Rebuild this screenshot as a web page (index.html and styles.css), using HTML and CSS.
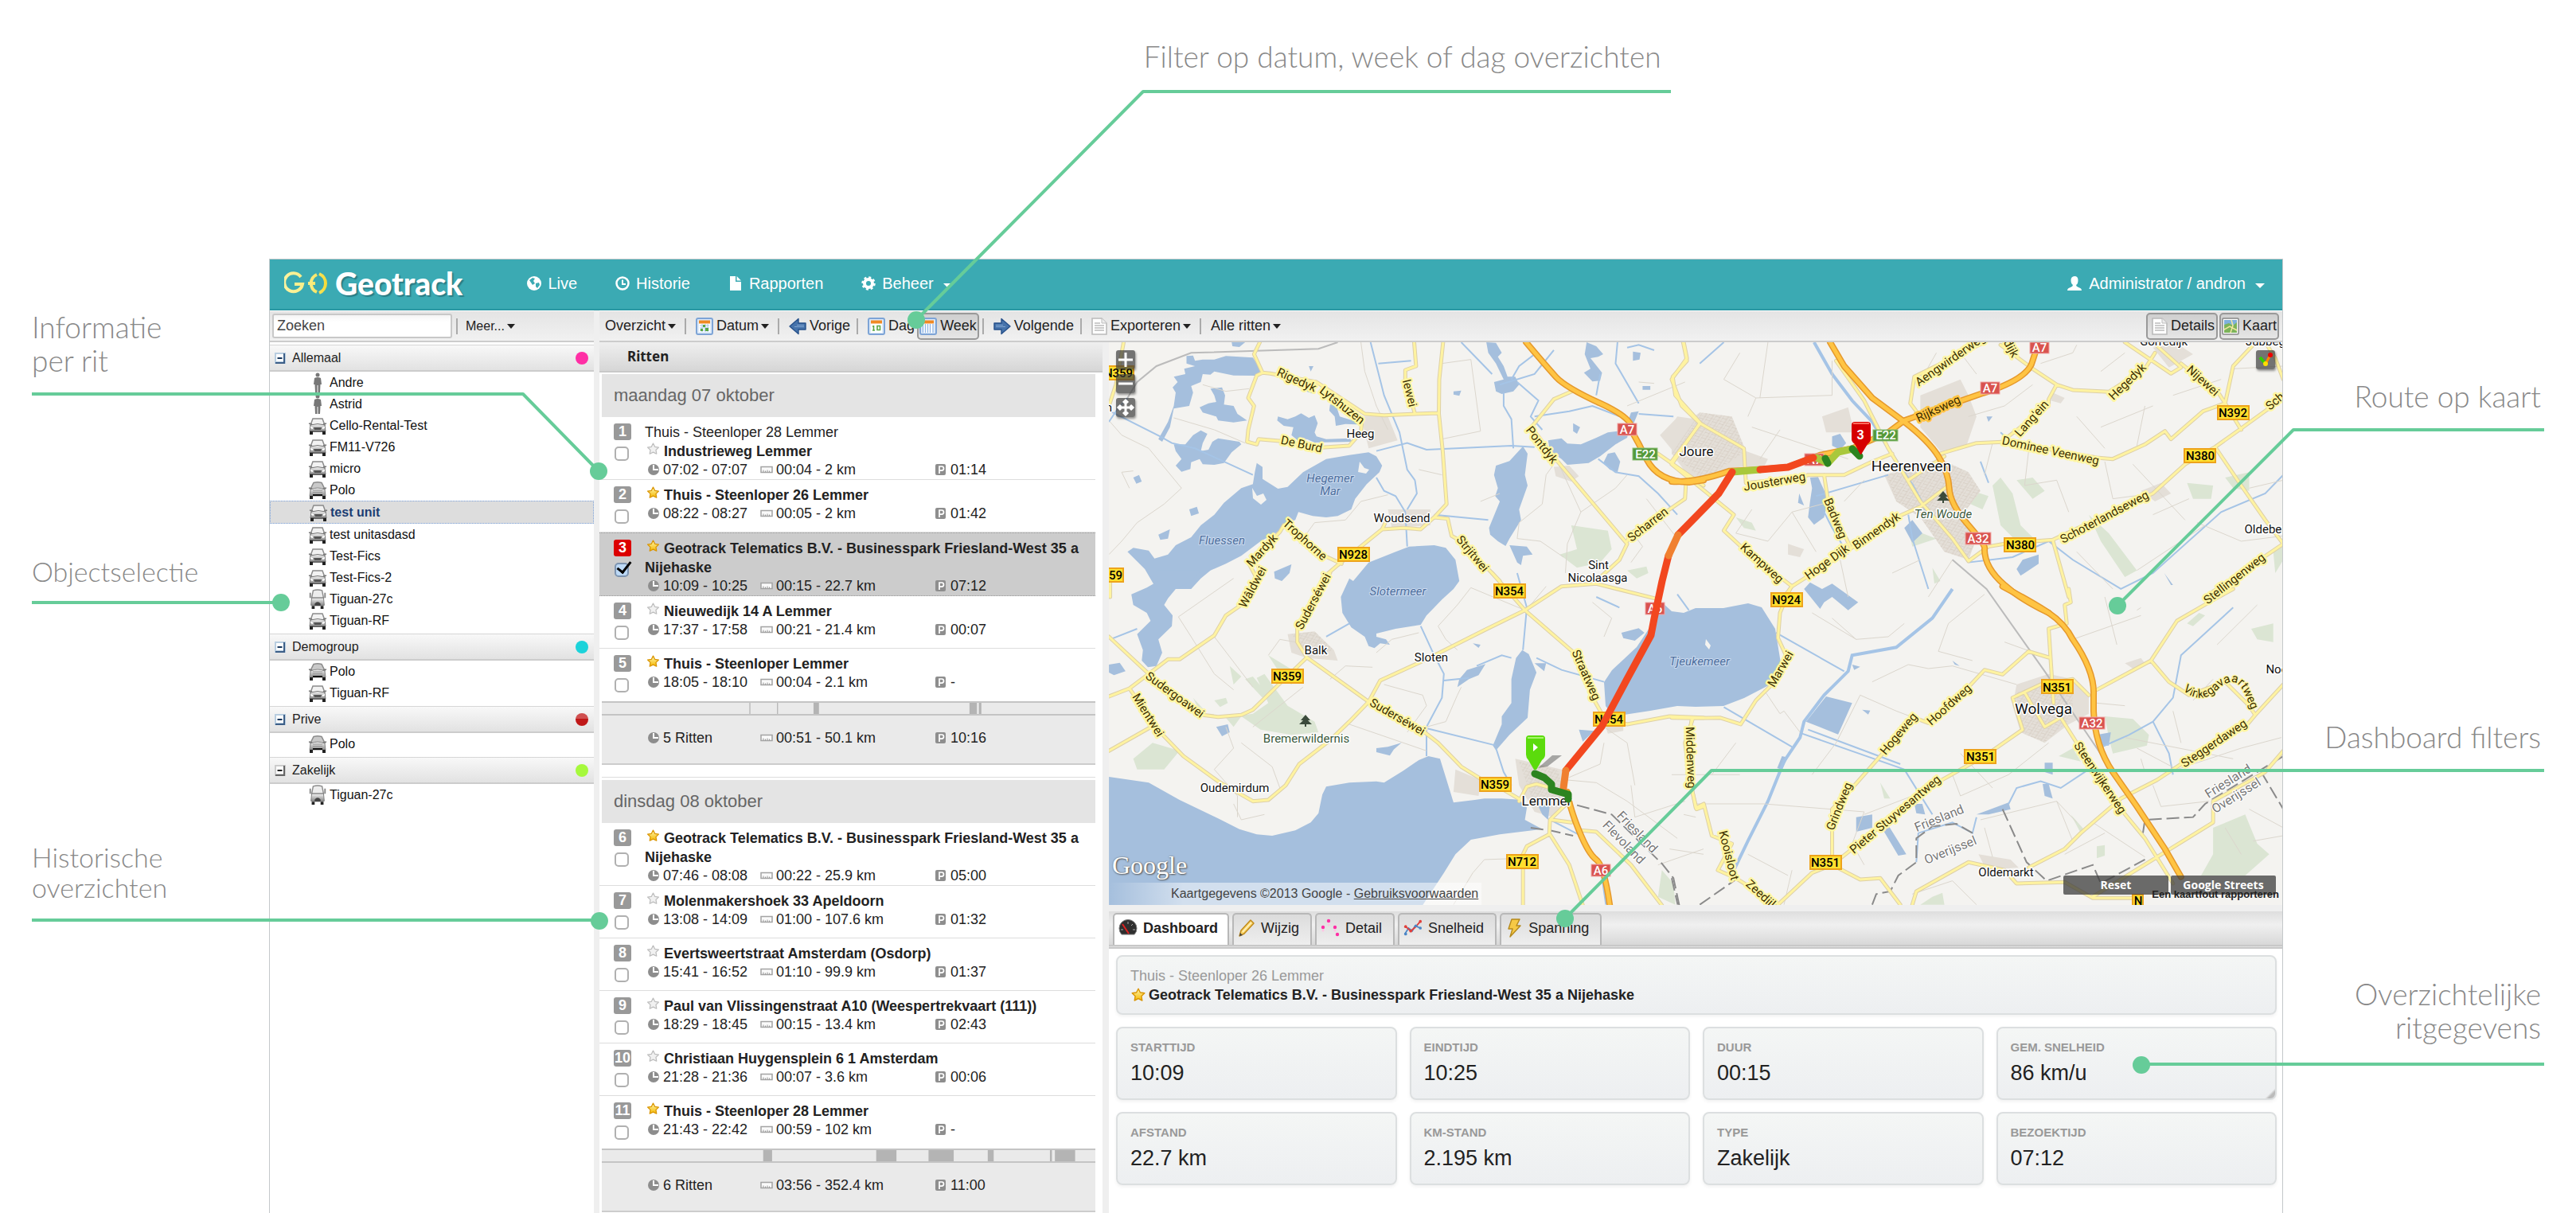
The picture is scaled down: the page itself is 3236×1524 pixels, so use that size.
FILE: index.html
```html
<!DOCTYPE html>
<html lang="nl">
<head>
<meta charset="utf-8">
<meta name="viewport" content="width=device-width, initial-scale=1">
<title>Geotrack</title>
<link rel="stylesheet" href="styles.css">
</head>
<body>
<svg class="sprite" aria-hidden="true">
  <defs>
    <linearGradient id="carGrad" x1="0" y1="0" x2="0" y2="1"><stop offset="0" stop-color="#f4f4f4"/><stop offset="1" stop-color="#8a8a8a"/></linearGradient>
    <linearGradient id="goldGrad" x1="0" y1="0" x2="0" y2="1"><stop offset="0" stop-color="#fff7b0"/><stop offset="1" stop-color="#f5b800"/></linearGradient>
    <linearGradient id="logoGrad" gradientUnits="userSpaceOnUse" x1="0" y1="0" x2="56" y2="0"><stop offset="0" stop-color="#fbf3a0"/><stop offset=".6" stop-color="#f9ec80"/><stop offset="1" stop-color="#f4d92c"/></linearGradient>
  </defs>
  <symbol id="i-car" viewBox="0 0 24 22">
    <path d="M6 2h12l3 8H3z" fill="#f2f2f2" stroke="#8b8b8b" stroke-width="1.5"/>
    <path d="M1 8l4 1M23 8l-4 1" stroke="#777" stroke-width="1.6"/>
    <path d="M3 10q9-3 18 0l1 8H2z" fill="url(#carGrad)" stroke="#777"/>
    <path d="M7 13h10l-1 3H8z" fill="#555"/><path d="M3 12l3 1v2l-3-1zM21 12l-3 1v2l3-1z" fill="#fff"/>
    <path d="M2 17h20v2H2z" fill="#666"/><path d="M2 18h4v4H2zM18 18h4v4h-4z" fill="#222"/>
  </symbol>
  <symbol id="i-sedan" viewBox="0 0 24 22">
    <path d="M7 1.500q5-1.500 10 0l4 8H3z" fill="#c9c9c9" stroke="#8b8b8b" stroke-width="1.500"/>
    <path d="M1 8l4 1M23 8l-4 1" stroke="#777" stroke-width="1.600"/>
    <path d="M3 10q9-4 18 0l1 8H2z" fill="url(#carGrad)" stroke="#888"/>
    <path d="M6 11h12M6 13.500h12" stroke="#999"/>
    <path d="M6 16h12v2H6z" fill="#111"/><path d="M2 18h4v4H2zM18 18h4v4h-4z" fill="#222"/>
  </symbol>
  <symbol id="i-van" viewBox="0 0 24 28">
    <path d="M6 2q6-2 12 0l2 10H4z" fill="#ededed" stroke="#8b8b8b" stroke-width="1.500"/>
    <path d="M2 5v7M22 5v7" stroke="#888" stroke-width="2"/>
    <path d="M4 12h16l1 10H3z" fill="url(#carGrad)" stroke="#777"/>
    <path d="M8 20q4-5 8 0v3H8z" fill="#444"/><path d="M4 23h4v4H4zM16 23h4v4h-4z" fill="#222"/>
  </symbol>
  <symbol id="i-person" viewBox="0 0 12 26">
    <circle cx="6" cy="3" r="2.500" fill="#777"/><path d="M2 7q4-2 8 0l1 8H9.500L9 25H6.500V16h-1v9H3L2.500 15H1z" fill="#777"/>
  </symbol>
  <symbol id="i-fold" viewBox="0 0 14 14">
    <path d="M0 0h14v14H0z" fill="#b8cde0"/><path d="M2 2h9v9H2z" fill="#fff"/><path d="M12 1v12H1" fill="none" stroke="#3d5f88" stroke-width="2"/><path d="M3.500 7h6" stroke="#16365c" stroke-width="2"/>
  </symbol>
  <symbol id="i-fold-grey" viewBox="0 0 14 14">
    <path d="M0 0h14v14H0z" fill="#ccc"/><path d="M2 2h9v9H2z" fill="#fff"/><path d="M12 1v12H1" fill="none" stroke="#666" stroke-width="2"/><path d="M3.500 7h6" stroke="#222" stroke-width="2"/>
  </symbol>
  <symbol id="i-star" viewBox="0 0 18 18">
    <path d="M9 1.200l2.400 4.800 5.400.8-3.900 3.800.9 5.400L9 13.600 4.200 16l.9-5.400L1.200 6.800l5.400-.8z" fill="url(#goldGrad)" stroke="#d99400" stroke-width="1.400" stroke-linejoin="round"/>
  </symbol>
  <symbol id="i-star-off" viewBox="0 0 18 18">
    <path d="M9 1.200l2.400 4.800 5.400.8-3.900 3.800.9 5.400L9 13.600 4.200 16l.9-5.400L1.200 6.800l5.400-.8z" fill="#f1f1f1" stroke="#bdbdbd" stroke-width="1.400" stroke-linejoin="round"/>
  </symbol>
  <symbol id="i-clock" viewBox="0 0 16 16">
    <circle cx="8" cy="8" r="7" fill="#8d8d8d"/><path d="M8 2v6h6" fill="none" stroke="#fff" stroke-width="2"/>
  </symbol>
  <symbol id="i-ruler" viewBox="0 0 16 16">
    <path d="M1 4.500h14v7H1z" fill="#fafafa" stroke="#a3a3a3" stroke-width="1.500"/><path d="M4 11V8.500M6.500 11V9.500M9 11V8.500M11.500 11V9.500" stroke="#999"/>
  </symbol>
  <symbol id="i-park" viewBox="0 0 16 16">
    <rect x="1" y="1" width="13" height="14" rx="2" fill="#8e8e8e"/><path d="M6 13V4h3q2.500 0 2.500 2.600T9 9.200H6" fill="none" stroke="#fff" stroke-width="1.700"/>
  </symbol>
  <symbol id="i-cal" viewBox="0 0 22 22">
    <rect x="1" y="1" width="20" height="20" rx="2" fill="#dce9f8" stroke="#7da4d6" stroke-width="2"/><path d="M4 4h14v14H4z" fill="#fff"/><path d="M4 3.500h14v4H4z" fill="#f08a24"/>
    <path d="M5 10h12M5 13h12M5 16h12M8 8v10M12 8v10M15 8v10" stroke="#a9c6e8"/><path d="M9 9h3v3H9zM12 13h4v4h-4zM6 14h3v3H6z" fill="#5aa746"/>
  </symbol>
  <symbol id="i-day" viewBox="0 0 22 22">
    <rect x="1" y="1" width="20" height="20" rx="2" fill="#dce9f8" stroke="#7da4d6" stroke-width="2"/><path d="M4 4h14v15H4z" fill="#fff"/><path d="M4 3.500h14v4H4z" fill="#f08a24"/>
    <path d="M7.500 10v6M6 16h3M6 11h1.500M12 10.500h3.500v5H12z" fill="none" stroke="#5aa746" stroke-width="1.600"/>
  </symbol>
  <symbol id="i-week" viewBox="0 0 22 22">
    <rect x="1" y="1" width="20" height="20" rx="2" fill="#dce9f8" stroke="#7da4d6" stroke-width="2"/><path d="M4 4h14v15H4z" fill="#fff"/><path d="M4 3.500h14v4H4z" fill="#f08a24"/>
    <path d="M4.500 8v11M7.500 8v11M10.500 8v11M13.500 8v11M17 8v11" stroke="#8fb5e4" stroke-width="1.300"/>
  </symbol>
  <symbol id="i-arrow" viewBox="0 0 22 22">
    <path d="M1 7h9V1.500L21 11l-11 9.500V15H1z" fill="#4673ab" stroke="#26508a" stroke-width="1.400" stroke-linejoin="round"/><path d="M3 9.500h9M3 11.500h12" stroke="#7fa3cf"/>
  </symbol>
  <symbol id="i-doc" viewBox="0 0 20 22">
    <path d="M1 1h12l6 6v14H1z" fill="#fff" stroke="#bbb" stroke-width="1.600"/><path d="M13 1v6h6" fill="#eee" stroke="#bbb"/><path d="M4 7h7M4 10h12M4 13h12M4 16h12" stroke="#bcbcbc" stroke-width="1.500"/>
  </symbol>
  <symbol id="i-map" viewBox="0 0 22 22">
    <rect x="1" y="1" width="20" height="20" rx="1" fill="#fff" stroke="#888" stroke-width="1.500"/><path d="M3 3h16v8H3z" fill="#7fb0dd"/><path d="M3 9l6-2 5 3 5-4v13H3z" fill="#7cb35a"/><path d="M3 15l7-4 9 5M12 3l2 7-3 9" fill="none" stroke="#f3e7a0" stroke-width="1.500"/>
  </symbol>
  <symbol id="i-gauge" viewBox="0 0 24 22">
    <path d="M4 19A11 11 0 1 1 20 19z" fill="#2f2f2f" stroke="#777"/><path d="M5 6l8 12" stroke="#e02020" stroke-width="2"/><path d="M3 13h3M18 13h3M12 3v3M18 6l-2 2" stroke="#aaa"/>
  </symbol>
  <symbol id="i-pencil" viewBox="0 0 22 24">
    <path d="M2 22l2-7L16 2l4 4L8 19z" fill="#fbd66b" stroke="#c08a1c" stroke-width="1.500" stroke-linejoin="round"/><path d="M6 17L17 5" stroke="#fff3c4" stroke-width="1.500"/><path d="M2 22l1-4 3 3z" fill="#444"/>
  </symbol>
  <symbol id="i-dots" viewBox="0 0 24 24">
    <g fill="#ff2fa5"><circle cx="3" cy="11" r="2.200"/><circle cx="10" cy="3" r="2.200"/><circle cx="18" cy="11" r="2.200"/><circle cx="21" cy="20" r="2.200"/></g><g fill="#ffc4e4"><circle cx="10" cy="8" r="1.500"/><circle cx="3" cy="15" r="1.500"/><circle cx="18" cy="15" r="1.500"/></g>
  </symbol>
  <symbol id="i-chart" viewBox="0 0 26 24">
    <path d="M2 20l5-8 5 4 4-7 7 3" fill="none" stroke="#4c86c6" stroke-width="2"/><path d="M3 10l7 6 6-5 7-8" fill="none" stroke="#e0403c" stroke-width="2"/><g fill="#e0403c"><circle cx="3" cy="10" r="2"/><circle cx="10" cy="16" r="2"/><circle cx="23" cy="3" r="2"/></g><g fill="#4c86c6"><circle cx="3" cy="20" r="2"/><circle cx="17" cy="9" r="2"/><circle cx="23" cy="12" r="2"/></g>
  </symbol>
  <symbol id="i-bolt" viewBox="0 0 20 24">
    <path d="M7 1h10l-4 8h5L5 23l3-10H3z" fill="#f6c945" stroke="#b5891d" stroke-width="1.400" stroke-linejoin="round"/>
  </symbol>
</svg>

<div class="page">
  <p class="note note--top">Filter op datum, week of dag overzichten</p>

  <aside class="notes notes--left">
    <p class="note">Informatie<br>per rit</p>
    <p class="note note--small note--objects">Objectselectie</p>
    <p class="note note--small note--history">Historische<br>overzichten</p>
  </aside>

  <div class="app">
    <header class="topbar">
      <a class="logo" href="#">
        <svg class="logo-mark" viewBox="0 0 56 30" aria-hidden="true"><g fill="none" stroke="url(#logoGrad)" stroke-width="4"><path d="M21 7A11.500 11.500 0 1 0 23 16H13"/><path d="M41 4A12 12 0 0 0 41 26M30 15h9"/><path d="M44 3A13 13 0 0 1 44 27"/></g></svg>
        <span>Geotrack</span>
      </a>
      <nav class="nav">
        <a href="#"><svg width="18" height="18" viewBox="0 0 18 18"><circle cx="9" cy="9" r="9" fill="#fff"/><path d="M3 5l4-3 3 1-2 3 2 3-3 2-2-3zM11 9l4-1 1 3-3 4-2-2z" fill="#3baab3"/></svg>Live</a>
        <a href="#"><svg width="18" height="18" viewBox="0 0 18 18"><circle cx="9" cy="9" r="7.500" fill="none" stroke="#fff" stroke-width="2.500"/><path d="M9 4.500V10h4" fill="none" stroke="#fff" stroke-width="2"/></svg>Historie</a>
        <a href="#"><svg width="18" height="18" viewBox="0 0 18 18"><path d="M2 0h7v7h7v11H2zM10.500 0L16 5.500h-5.500z" fill="#fff"/></svg>Rapporten</a>
        <a href="#"><svg width="18" height="18" viewBox="0 0 18 18"><circle cx="9" cy="9" r="5" fill="none" stroke="#fff" stroke-width="4"/><circle cx="9" cy="9" r="7.500" fill="none" stroke="#fff" stroke-width="2.500" stroke-dasharray="3 2.890"/></svg>Beheer<i class="caret caret--light"></i></a>
      </nav>
      <a class="user" href="#"><svg width="20" height="18" viewBox="0 0 20 18"><path d="M10 0q4.500 0 4.500 5T12 11q0 2 3 3 4 1 4 4H1q0-3 4-4 3-1 3-3Q5.500 9.500 5.500 5T10 0z" fill="#fff"/></svg>Administrator / andron<i class="caret caret--light"></i></a>
    </header>

    <div class="workspace">
      <section class="objects">
        <div class="toolbar toolbar--search">
          <input class="search" type="text" value="Zoeken" aria-label="Zoeken">
          <i class="sep"></i>
          <button class="tool tool--small">Meer...<i class="caret"></i></button>
        </div>
        <h2 class="group"><svg width="14" height="14"><use href="#i-fold"/></svg>Allemaal<i class="dot dot--pink"></i></h2>
        <ul class="units">
          <li><svg><use href="#i-person"/></svg>Andre</li>
          <li><svg><use href="#i-person"/></svg>Astrid</li>
          <li><svg><use href="#i-car"/></svg>Cello-Rental-Test</li>
          <li><svg><use href="#i-car"/></svg>FM11-V726</li>
          <li><svg><use href="#i-car"/></svg>micro</li>
          <li><svg><use href="#i-sedan"/></svg>Polo</li>
          <li class="is-selected"><svg><use href="#i-car"/></svg>test unit</li>
          <li><svg><use href="#i-car"/></svg>test unitasdasd</li>
          <li><svg><use href="#i-car"/></svg>Test-Fics</li>
          <li><svg><use href="#i-car"/></svg>Test-Fics-2</li>
          <li><svg><use href="#i-van"/></svg>Tiguan-27c</li>
          <li><svg><use href="#i-car"/></svg>Tiguan-RF</li>
        </ul>
        <h2 class="group"><svg width="14" height="14"><use href="#i-fold"/></svg>Demogroup<i class="dot dot--cyan"></i></h2>
        <ul class="units">
          <li><svg><use href="#i-sedan"/></svg>Polo</li>
          <li><svg><use href="#i-car"/></svg>Tiguan-RF</li>
        </ul>
        <h2 class="group"><svg width="14" height="14"><use href="#i-fold"/></svg>Prive<i class="dot dot--red"></i></h2>
        <ul class="units">
          <li><svg><use href="#i-sedan"/></svg>Polo</li>
        </ul>
        <h2 class="group"><svg width="14" height="14"><use href="#i-fold-grey"/></svg>Zakelijk<i class="dot dot--lime"></i></h2>
        <ul class="units">
          <li><svg><use href="#i-van"/></svg>Tiguan-27c</li>
        </ul>
      </section>

      <main class="history">
        <div class="toolbar">
          <button class="tool tool--menu">Overzicht<i class="caret"></i></button><i class="sep"></i>
          <button class="tool tool--menu"><svg width="22" height="22"><use href="#i-cal"/></svg>Datum<i class="caret"></i></button><i class="sep"></i>
          <button class="tool"><svg class="flip" width="22" height="22"><use href="#i-arrow"/></svg>Vorige</button><i class="sep"></i>
          <button class="tool tool--tight"><svg width="22" height="22"><use href="#i-day"/></svg>Dag</button>
          <button class="tool tool--pressed"><svg width="22" height="22"><use href="#i-week"/></svg>Week</button><i class="sep sep--after"></i>
          <button class="tool"><svg width="22" height="22"><use href="#i-arrow"/></svg>Volgende</button><i class="sep"></i>
          <button class="tool tool--menu"><svg width="20" height="22"><use href="#i-doc"/></svg>Exporteren<i class="caret"></i></button><i class="sep"></i>
          <button class="tool tool--menu">Alle ritten<i class="caret"></i></button>
          <div class="views">
            <button class="tool tool--pressed tool--view"><svg width="20" height="22"><use href="#i-doc"/></svg>Details</button>
            <button class="tool tool--pressed"><svg width="22" height="22"><use href="#i-map"/></svg>Kaart</button>
          </div>
        </div>

        <div class="columns">
          <section class="trips">
            <h2 class="trips-head">Ritten</h2>
            <h3 class="day">maandag 07 oktober</h3>
            <ol class="legs">
              <li class="leg"><div class="mark"><span class="badge">1</span><input type="checkbox" aria-label="Rit 1"></div><div class="body"><p class="from">Thuis - Steenloper 28 Lemmer</p><p class="to"><svg><use href="#i-star-off"/></svg>Industrieweg Lemmer</p><p class="facts"><span><svg><use href="#i-clock"/></svg>07:02 - 07:07</span><span><svg><use href="#i-ruler"/></svg>00:04 - 2 km</span><span><svg><use href="#i-park"/></svg>01:14</span></p></div></li>
              <li class="leg"><div class="mark"><span class="badge">2</span><input type="checkbox" aria-label="Rit 2"></div><div class="body"><p class="to"><svg><use href="#i-star"/></svg>Thuis - Steenloper 26 Lemmer</p><p class="facts"><span><svg><use href="#i-clock"/></svg>08:22 - 08:27</span><span><svg><use href="#i-ruler"/></svg>00:05 - 2 km</span><span><svg><use href="#i-park"/></svg>01:42</span></p></div></li>
              <li class="leg is-active"><div class="mark"><span class="badge">3</span><input type="checkbox" aria-label="Rit 3" checked></div><div class="body"><p class="to"><svg><use href="#i-star"/></svg>Geotrack Telematics B.V. - Businesspark Friesland-West 35 a Nijehaske</p><p class="facts"><span><svg><use href="#i-clock"/></svg>10:09 - 10:25</span><span><svg><use href="#i-ruler"/></svg>00:15 - 22.7 km</span><span><svg><use href="#i-park"/></svg>07:12</span></p></div></li>
              <li class="leg"><div class="mark"><span class="badge">4</span><input type="checkbox" aria-label="Rit 4"></div><div class="body"><p class="to"><svg><use href="#i-star-off"/></svg>Nieuwedijk 14 A Lemmer</p><p class="facts"><span><svg><use href="#i-clock"/></svg>17:37 - 17:58</span><span><svg><use href="#i-ruler"/></svg>00:21 - 21.4 km</span><span><svg><use href="#i-park"/></svg>00:07</span></p></div></li>
              <li class="leg"><div class="mark"><span class="badge">5</span><input type="checkbox" aria-label="Rit 5"></div><div class="body"><p class="to"><svg><use href="#i-star"/></svg>Thuis - Steenloper Lemmer</p><p class="facts"><span><svg><use href="#i-clock"/></svg>18:05 - 18:10</span><span><svg><use href="#i-ruler"/></svg>00:04 - 2.1 km</span><span><svg><use href="#i-park"/></svg>-</span></p></div></li>
            </ol>
            <svg class="timeline" viewBox="0 0 1000 10" preserveAspectRatio="none" aria-hidden="true"><path d="M299 0h2v10h-2zM355 0h2v10h-2zM429 0h11v10h-11zM745 0h15v10h-15zM764 0h5v10h-5z"/></svg>
            <p class="total"><span><svg><use href="#i-clock"/></svg>5 Ritten</span><span><svg><use href="#i-ruler"/></svg>00:51 - 50.1 km</span><span><svg><use href="#i-park"/></svg>10:16</span></p>

            <h3 class="day day--next">dinsdag 08 oktober</h3>
            <ol class="legs">
              <li class="leg"><div class="mark"><span class="badge">6</span><input type="checkbox" aria-label="Rit 6"></div><div class="body"><p class="to"><svg><use href="#i-star"/></svg>Geotrack Telematics B.V. - Businesspark Friesland-West 35 a Nijehaske</p><p class="facts"><span><svg><use href="#i-clock"/></svg>07:46 - 08:08</span><span><svg><use href="#i-ruler"/></svg>00:22 - 25.9 km</span><span><svg><use href="#i-park"/></svg>05:00</span></p></div></li>
              <li class="leg"><div class="mark"><span class="badge">7</span><input type="checkbox" aria-label="Rit 7"></div><div class="body"><p class="to"><svg><use href="#i-star-off"/></svg>Molenmakershoek 33 Apeldoorn</p><p class="facts"><span><svg><use href="#i-clock"/></svg>13:08 - 14:09</span><span><svg><use href="#i-ruler"/></svg>01:00 - 107.6 km</span><span><svg><use href="#i-park"/></svg>01:32</span></p></div></li>
              <li class="leg"><div class="mark"><span class="badge">8</span><input type="checkbox" aria-label="Rit 8"></div><div class="body"><p class="to"><svg><use href="#i-star-off"/></svg>Evertsweertstraat Amsterdam (Osdorp)</p><p class="facts"><span><svg><use href="#i-clock"/></svg>15:41 - 16:52</span><span><svg><use href="#i-ruler"/></svg>01:10 - 99.9 km</span><span><svg><use href="#i-park"/></svg>01:37</span></p></div></li>
              <li class="leg"><div class="mark"><span class="badge">9</span><input type="checkbox" aria-label="Rit 9"></div><div class="body"><p class="to"><svg><use href="#i-star-off"/></svg>Paul van Vlissingenstraat A10 (Weespertrekvaart (111))</p><p class="facts"><span><svg><use href="#i-clock"/></svg>18:29 - 18:45</span><span><svg><use href="#i-ruler"/></svg>00:15 - 13.4 km</span><span><svg><use href="#i-park"/></svg>02:43</span></p></div></li>
              <li class="leg"><div class="mark"><span class="badge">10</span><input type="checkbox" aria-label="Rit 10"></div><div class="body"><p class="to"><svg><use href="#i-star-off"/></svg>Christiaan Huygensplein 6 1 Amsterdam</p><p class="facts"><span><svg><use href="#i-clock"/></svg>21:28 - 21:36</span><span><svg><use href="#i-ruler"/></svg>00:07 - 3.6 km</span><span><svg><use href="#i-park"/></svg>00:06</span></p></div></li>
              <li class="leg"><div class="mark"><span class="badge">11</span><input type="checkbox" aria-label="Rit 11"></div><div class="body"><p class="to"><svg><use href="#i-star"/></svg>Thuis - Steenloper 28 Lemmer</p><p class="facts"><span><svg><use href="#i-clock"/></svg>21:43 - 22:42</span><span><svg><use href="#i-ruler"/></svg>00:59 - 102 km</span><span><svg><use href="#i-park"/></svg>-</span></p></div></li>
            </ol>
            <svg class="timeline" viewBox="0 0 1000 10" preserveAspectRatio="none" aria-hidden="true"><path d="M327 0h18v10h-18zM556 0h41v10h-41zM662 0h51v10h-51zM782 0h12v10h-12zM908 0h4v10h-4zM918 0h41v10h-41z"/></svg>
            <p class="total"><span><svg><use href="#i-clock"/></svg>6 Ritten</span><span><svg><use href="#i-ruler"/></svg>03:56 - 352.4 km</span><span><svg><use href="#i-park"/></svg>11:00</span></p>
          </section>

          <section class="detail">
            <div class="map">
              <svg class="map-canvas" viewBox="1393 430 1474 707" role="img" aria-label="Kaart">
                <defs>
                  <pattern id="streets" width="18" height="22" patternUnits="userSpaceOnUse" patternTransform="rotate(24)"><path d="M0 0h18M0 11h12M0 0v22M12 0v22" stroke="#c9bfb1" fill="none"/></pattern>
                  <path id="p-vinke" d="M2742 867Q2764 886 2784 868Q2806 846 2818 868L2832 900"/>
                </defs>
                <g class="green">
                  <g transform="translate(1380 310) scale(.4847 .3333)"><path d="M1225 1050L1320 1070 1330 1140 1300 1190 1240 1210 1195 1160 1240 1140zM1370 1220l50-15 5 25-30 20z"/></g>
                  <g transform="translate(1380 720) scale(.4847 .3333)"><path d="M410 395L430 380 490 500 560 560 570 600 500 610 420 590 370 540 350 580 330 545 400 530 440 490zM90 700L140 640 210 670 170 740 100 740zM440 310L520 380 500 420 480 400zM340 350L370 390 350 420zM380 400l20-10 40 70-15 10zM1460 1120L1490 1170 1495 1250 1450 1220zM245 470l25 40-5 20zM300 480l30-10 5 20-20 15z"/></g>
                  <g transform="translate(2100 310) scale(.5038 .3333)"><path d="M820 870L850 930 870 1050 910 1110 880 1140 820 1050 800 900zM860 880L900 870 930 920 900 950zM750 920l40 20-15 50-30-20zM1040 1010L1090 1080 1160 1220 1130 1245 1070 1110zM1285 890L1350 900 1345 950 1300 950zM590 1060L660 1100 600 1130zM1380 870L1440 850 1440 920 1400 910zM1500 1150l25-30v60l-20 50zM650 1210l20 50-15 10zM160 1020l40 20 10 30-30-10z"/></g>
                  <g transform="translate(2100 740) scale(.5038 .3333)"><path d="M1080 480L1150 490 1190 550 1185 590 1100 620 1090 560zM965 630L1000 600 1020 650zM1350 900L1430 850 1460 960 1490 1000 1430 1080 1320 1080 1350 1000zM995 850L1030 910 1020 920zM1060 970l20-5v40l-20 10zM1445 150L1500 130 1500 200 1460 190zM1285 130l30-40 15 10-30 40zM520 730L545 790 530 790zM620 1190l30-30 25-15 5 45z"/></g>
                </g>
                <g class="urban">
                  <g transform="translate(1380 310) scale(.4847 .3333)"><path d="M680 640L750 640 775 730 700 760zM750 990L860 990 860 1050 760 1060zM1180 830l40-5 25 40-20 20-40-20zM1500 640l50 10 18 90-18 80-50-30-45-80 40-60z"/></g>
                  <g transform="translate(1380 720) scale(.4847 .3333)"><path d="M490 230L560 220 610 290 620 330 540 320 500 300zM1080 700L1200 740 1215 840 1180 920 1130 900 1090 800zM925 740L990 780 985 840 920 825zM1310 560l50 10v25l-40 10z"/></g>
                  <g transform="translate(2100 310) scale(.5038 .3333)"><path d="M70 625L150 640 185 770 240 800 230 830 170 830 80 880 40 860 0 780 0 700zM530 860L600 830 670 800 740 850 770 920 730 1000 760 1100 740 1180 680 1150 620 1020 560 960zM620 560L720 500 740 560 760 640 735 750 670 770 620 680zM375 640L440 605 455 700 385 700zM1170 920l50-30 25 40-40 30zM1200 380l60-15 40 40-60 50zM950 550l30 20-10 20-25-10zM290 1120l40 20-10 30-30-10z"/></g>
                  <g transform="translate(2100 740) scale(.5038 .3333)"><path d="M860 360L940 320 1000 340 1040 400 1040 470 990 510 930 580 870 540 850 440zM765 1000l80 20 20 30-80 10zM1130 280l40-20 10 20-30 20z"/></g>
                </g>
                <g class="streets">
                  <g transform="translate(2100 310) scale(.5038 .3333)"><path d="M70 625L150 640 185 770 80 880 0 780zM535 860L600 830 670 800 740 850 770 920 730 1000 760 1100 740 1180 680 1150 620 1020 560 960z"/></g>
                  <g transform="translate(2100 740) scale(.5038 .3333)"><path d="M860 390L940 350 1000 360 1000 480 930 580 870 540z"/></g>
                  <g transform="translate(1380 720) scale(.4847 .3333)"><path d="M500 230L560 220 610 290 540 320zM1090 710L1190 740 1210 840 1130 880z"/></g>
                </g>
                <g class="water">
                  <g transform="translate(1380 310) scale(.4847 .3333)"><path d="M228 412L245 410 250 430 270 425 300 425 330 412 400 418 412 445 428 470 410 486 350 485 300 470 290 482 270 480 265 510 240 525 245 550 235 600 195 610 185 680 165 735 155 725 180 660 195 600 200 550 192 530 205 510 195 490 225 480 222 460 250 450 228 440zM290 535L320 530 328 560 325 595 350 600 360 630 385 655 350 662 310 655 305 640 270 625 262 605 285 590 305 585 300 560zM465 640L490 650 510 640 525 628 545 645 560 635 568 665 560 700 565 715 590 725 650 722 660 735 560 738 540 725 520 735 500 710 505 680 480 675 463 655zM600 595L615 595 625 640 670 660 670 670 640 668 615 675 612 640 598 618zM245 710L265 692 282 705 270 740 265 770 285 765 295 735 310 722 365 735 370 745 345 775 325 815 300 822 270 820 262 800 240 812 238 838 215 848 200 825 215 800 200 770 195 745 225 745zM410 815L425 830 425 875 465 912 490 905 530 850 590 800 650 785 700 775 720 790 735 825 728 850 695 895 665 950 655 990 620 1015 590 1020 555 1015 518 1000 510 1030 480 1045 465 1075 420 1110 370 1165 330 1195 290 1220 265 1250 240 1290 150 1290 120 1215 75 1150 90 1135 130 1145 145 1175 180 1160 200 1125 240 1095 265 1050 300 1010 325 965 370 910 400 895 405 850zM155 1085L185 1065 180 1100 160 1105zM90 870L105 860 112 885 98 893zM235 990L255 980 260 1005 240 1015zM455 1225L500 1197 495 1230 475 1260 457 1250zM545 450h12l-7 20zM535 530L565 545 555 553 538 545zM345 360h35l-15 18-18-3zM1100 752L1112 780 1105 860 1112 900 1090 990 1095 1030 1065 1100 1055 1128 1035 1110 1015 1085 1012 1060 1040 960 1028 940 1035 910 1025 860 1030 825 1065 808zM1065 1125L1110 1130 1125 1160 1100 1165 1095 1200 1085 1190zM1165 730L1200 722 1215 742 1250 745 1290 720 1320 700 1375 690 1370 720 1340 745 1300 790 1270 815 1215 822 1200 800 1170 770zM1320 780L1338 775 1352 810 1345 850 1325 840 1308 815zM1005 360L1030 362 1045 400 1035 415 1050 450 1060 490 1080 490 1090 520 1075 545 1045 555 1030 545 1025 510 1050 500 1030 440 1010 400zM1265 360L1290 375 1308 405 1295 415 1275 420 1305 475 1300 505 1280 508 1258 475 1275 460 1260 405zM1385 395L1405 400 1402 425 1385 430zM1380 625L1400 620 1380 690 1365 690zM1410 525h20v14h-20zM1230 665l18 15-8 25-10-10zM920 545l20-3-5 20-15-5z"/></g>
                  <g transform="translate(1380 720) scale(.4847 .3333)"><path d="M660 30L700 -40 770 -80 805 -100 870 -105 900 -95 925 -50 935 30 920 60 890 100 850 160 835 195 770 210 720 228 720 240 745 250 755 270 730 265 715 283 700 275 690 240 655 205 632 150 628 90 650 20zM150 -10L155 30 125 55 85 80 90 120 125 150 135 180 100 230 115 290 112 330 128 355 150 350 165 300 155 250 190 200 192 160 170 120 180 95 200 60 240 30 265 -10zM27 345L55 338 70 370 40 385 27 375zM27 768L130 790 210 855 310 925 365 965 410 985 450 990 510 970 550 940 570 905 580 835 590 805 650 790 720 785 740 790 790 745 830 705 855 690 885 700 900 770 920 865 975 855 1000 850 1045 850 1100 855 1110 885 1105 930 1150 965 1040 985 965 1005 925 1060 895 1130 840 1252 27 1252zM1098 290L1115 305 1135 375 1118 440 1112 545 1065 610 1030 668 1022 650 1045 570 1045 540 1070 490 1070 400 1082 320zM955 365L1003 343 985 385 960 400 930 430 935 400zM1130 340h30l-5 30zM720 660L750 655 785 640 765 665 755 688 720 675zM1355 225L1400 208 1415 225 1390 255 1360 245zM1245 590L1285 595 1255 635zM305 580L335 570 340 600 320 615zM970 265l20 5-5 12zM1140 880l30-10-5 60-15-20z"/></g>
                  <path d="M2056 813L2025 842 2015 857 2017 887 2027 900 2073 893 2107 887 2130 888 2165 887 2191 877 2218 863 2236 853 2237 833 2230 790 2213 763 2196 758 2165 764 2130 764 2115 770 2100 768 2088 757 2078 780z"/>
                  <g transform="translate(2100 310) scale(.5038 .3333)"><path d="M400 715L420 705 435 740 420 765 400 750zM345 870L365 868 390 950 380 1020 355 1048 340 1020 345 960 350 910zM875 1180L915 1160 915 1195 870 1240 860 1215zM580 1060L600 1030 625 1080 600 1115zM1228 1230L1250 1275 1245 1275zM318 930l12 45-15-10zM785 640h15l-10 20z"/></g>
                  <g transform="translate(2100 740) scale(.5038 .3333)"><path d="M330 0L345 -25 375 0 400 -20 465 50 440 80 400 30 380 50 370 75zM385 405L450 430 415 548 335 500zM1060 550L1095 540 1090 590 1065 590zM930 655h20v45l-20-10zM925 735h15l10 55-20-10zM760 850L840 805 845 830 790 850zM520 890h20l45 110-20 5zM460 860l40-10v50l-40 15zM605 810h20l7 40-22-5zM450 285l20 8-15 12zM475 455l20 3-5 15zM700 270l18 20-12-5zM275 630l15 5-15 45-12-5z"/></g>
                </g>
                <g class="isle"><path d="M1573 613l6 10 8-3 4 8-7 6-10-8zM1708 580l6 8 6 2-4 5-10-2zM2143 803l6 8-2 5-5-6z"/></g>
                <g class="streams">
                  <g transform="translate(1380 310) scale(.4847 .3333)"><path d="M705 360L740 560 780 700 800 840 820 880M30 620L160 715 190 740 250 760 400 860M720 770L800 740 850 765 1070 750 1130 755M1050 550V600L1070 650 1075 760M940 360L1020 480M725 440L810 430M1040 520L1130 480 1180 390M1085 510L1140 580 1120 640 1150 690M1135 400L1090 450 1070 500M720 870L740 920 770 940 795 1000 800 1130M820 880L825 930 800 990M870 1010L1010 1030M1295 800L1340 850 1400 865 1450 930 1500 1010M1345 360L1340 440 1400 590M1130 640l90-20 60-20 90 50M1400 630l90 10M27 660L50 610 75 570M1300 480L1290 560M1370 380l30-10 40 20"/></g>
                  <g transform="translate(1380 720) scale(.4847 .3333)"><path d="M1085 0L1110 130 1100 290M835 200L870 310 895 380 890 470 850 580V690M895 405L960 395M980 350L1045 310 1070 320M1135 320L1200 365 1310 410M850 585L1030 650M1030 660L1050 750 1070 800M1170 930L1250 990 1300 1100 1315 1250M30 250L100 210M590 240l60-50M1290 90l60 40M1500 80l30 60"/></g>
                  <g class="canal" transform="translate(2100 310) scale(.5038 .3333)"><path d="M355 360L400 480 450 580 500 660 540 760 600 900 640 1010"/></g>
                  <g transform="translate(2100 310) scale(.5038 .3333)"><path d="M740 1190L850 1170 940 1110 1000 1180 1120 1290 1200 1230 1370 1000 1480 930 1525 860M590 1010L600 1100 640 1290M130 360L70 440M380 1000l20 60M400 1060l40 100M540 860l-180 80M770 810l20 80M820 700l30 40"/></g>
                  <g class="canal" transform="translate(2100 740) scale(.5038 .3333)"><path d="M700 0L650 110 560 220 450 250 440 310 380 400 330 500 320 560 280 650 240 800 190 950 155 1060 160 1095"/></g>
                  <g transform="translate(2100 740) scale(.5038 .3333)"><path d="M260 165L430 310M130 445L300 595M325 545L580 680M340 530L570 660M580 680L650 850M610 1030L615 920 700 880 750 920 760 860M840 810L860 750 920 725 970 750 1040 680M1065 600L1140 550 1200 500 1250 410 1270 250 1400 70M1200 500l40 120 10 80"/></g>
                </g>
                <g class="lanes">
                  <g transform="translate(1380 310) scale(.4847 .3333)"><path d="M30 660L60 710 130 760 215 910 170 970 100 1040 60 1110 27 1160M60 850L90 845M60 850L80 910M195 645L300 690 380 740M680 360L690 470 720 600 750 690M890 440L965 425 990 695 890 725M270 520l60 25 60-10M520 1120L560 1040 640 1030 680 960 750 935M830 840l60 20M1085 1100L1090 1040 1150 970 1160 860 1190 800M1190 810L1250 1000 1215 1120 1210 1230M1370 600L1520 510M1400 510L1440 515M1250 1000L1340 910 1370 860M1085 1100l60 10 60 60M1380 1070l30 60-30 60M1420 950l80 150M1040 930l-50 30"/></g>
                  <g transform="translate(1380 720) scale(.4847 .3333)"><path d="M207 165L350 20M207 165L240 240 300 380 350 440M300 240L400 430M440 310L470 250 510 260M600 400L640 350 710 355M400 580L530 430M330 580l20 80-50 80M370 640l80 90 20 80M300 740l60 100 0 80M350 870l20 60 60-20M880 200L930 120 965 55 1105 140M880 200L900 250 930 290M930 460L900 560 850 580M720 300L760 250 830 225M740 420L840 460 850 500 800 600M930 460l10-30M1050 50l30 0M1160 50L1120 120M1280 110L1330 170 1310 240M1215 780L1290 790 1370 860 1500 1000M1310 640L1300 720 1220 770M1380 800L1390 920M1310 580l60 60 20 160M970 1130L1000 1080 1100 1075M970 1130L920 1250M1480 1040L1568 1060M1390 920L1520 860M1450 1100L1568 1040M650 570l200 100"/></g>
                  <g transform="translate(2100 310) scale(.5038 .3333)"><path d="M170 400L130 500 210 570 400 560M220 570L240 360M210 570L190 640M400 560L400 430M200 680L440 800M270 690L220 800M660 400L630 480M200 990L160 1080 240 1110M240 1110L300 1000 400 960M300 1000l60 150M480 880L430 960M730 420l30 60M740 640L830 600 900 520M800 740L780 860M890 770L880 900 960 880M960 880L990 1000M1080 810L1100 950 1200 930M1010 640L1080 760M1180 600L1160 750M1070 680L1200 600M1150 820L1280 1030M1200 1010L1290 950M1010 1150L1100 1290M1160 1220L1330 1050M1310 1040L1420 1110 1525 1090M1440 910L1525 880M1400 460L1525 450M920 440L1000 400 1010 370M1070 470L1130 400M1250 560L1370 500M550 1230L620 1180M420 1180L440 1320M700 1180L640 1320"/></g>
                  <g transform="translate(2100 740) scale(.5038 .3333)"><path d="M350 90L460 190 540 180 580 130M460 190L400 110M500 350L590 285 640 300 700 290 860 360M665 235L690 130 780 20M665 235L750 270M830 200L940 260M230 380L270 470 280 460 320 540M470 400L560 460 630 500M470 400L410 580 350 700M160 580L100 700M0 700L170 700M60 810L230 810 480 840 450 960 480 1040M480 850L600 780M720 620L800 750M700 700L720 780 840 700 940 580M770 870L960 800 1000 950M780 900L800 1010M960 800L1010 880M30 850L60 860M300 1060L280 1190M190 1000L290 1080M600 1150L700 1100 760 1190M1080 30L1110 210M1000 190L1170 100M1160 80L1170 70M1170 640L1180 690M1160 600L1260 680 1420 600 1520 560M1270 580L1250 460M1350 340L1300 420M1360 210L1460 60M1130 560L1400 640M1060 430L1130 440M1200 740L1220 820 1340 800M1050 880L1180 1010M1080 920L980 1000M1440 830L1525 900M1450 950L1525 930M1380 900L1420 1000"/></g>
                </g>
                <g class="rail">
                  <g transform="translate(1380 310) scale(.4847 .3333)"><path d="M75 570L100 510 150 450 240 400 570 385 620 360"/></g>
                  <g transform="translate(2100 740) scale(.5038 .3333)"><path d="M700 -110L785 0 930 310 1060 600 1120 740"/></g>
                </g>
                <g class="border">
                  <g transform="translate(1380 720) scale(.4847 .3333)"><path d="M1240 875L1330 910 1460 1095 1490 1150 1505 1252M1120 960l50 10 60 20"/></g>
                  <g transform="translate(2100 740) scale(.5038 .3333)"><path d="M0 1090L15 1190M70 1190L160 1095M500 1190L510 1150 545 1140 565 1080 610 1030 610 940 650 895 710 885 750 920M825 830L885 1030 935 1100 1050 1040 1070 1110 1180 1020M1175 920L1180 870 1300 860 1330 810 1525 630M1470 690L1525 830"/></g>
                </g>
                <g class="road-edge"><g id="roads">
                  <g transform="translate(1380 310) scale(.4847 .3333)"><path d="M418 360L403 405 425 475 445 478 565 510 690 630 740 635 880 627M425 475L410 485 388 570 403 600 388 690 385 735 410 745 415 725 475 733 577 757 650 750 680 700 683 645M818 360L823 450 795 465 795 500 820 630M893 360L883 500 882 630 892 770 902 970 870 1020 905 1025 915 1090 940 1110 1040 1260M870 1020L835 1065 790 1060 735 1065 620 1200 580 1250M735 1065L750 1020M390 1195L470 1075 480 1050 585 1165 630 1195M390 1195L410 1250M1235 540L1180 575 1122 680 1190 810 1370 1120 1350 1180 1290 1260M1370 1110L1380 1080 1470 1000 1520 950 1522 900M1515 360L1525 430 1488 490 1495 560 1560 665 1485 810M1450 780L1568 900M65 360L45 520 27 600"/></g>
                  <g transform="translate(1380 720) scale(.4847 .3333)"><path d="M27 240L130 380 200 470 270 535 310 542 370 535 400 515 460 430 540 318 515 260V200L600 0M130 380L180 325 210 325 300 235 330 160 370 120 420 0M540 318L700 485 845 600 880 640 940 730 990 775 1030 800 1100 860M27 670L130 585M27 465L80 435 130 380M80 435L160 600 220 690 310 785 400 860 440 855 485 800 520 720 600 630 650 560 700 485 730 405 850 325 1000 215 1105 140 1200 50 1290 40 1440 95M1020 0L1105 140 1240 310 1270 380 1285 480 1310 545 1370 570 1480 540 1568 545M1540 550L1520 640 1535 800 1550 890 1568 880M1090 860L1110 805 1135 795 1210 825M1220 860L1170 930 1168 985 1110 1030 1100 1060V1252M1170 985L1220 1100 1255 1252M1175 930L1225 940M1250 970L1290 975 1380 1100 1460 1252M30 0v90"/></g>
                  <g transform="translate(2100 310) scale(.5038 .3333)"><path d="M30 360L38 420 0 500 25 600 70 665 180 760 185 890 325 870 340 860 430 860 500 810 550 780M0 820L70 665M0 820L155 1010 130 1070 180 1140 300 1280 280 1320M300 1280L435 1150 560 1020 620 980 690 900M380 860L390 960 445 1130M410 430L480 580 540 760 620 960 700 1100 740 1185 790 1130 830 1120M905 1110L950 1105 1170 950 1200 930 1280 820 1355 755 1420 685 1525 570M950 1105L990 1320M670 780L760 740 835 735 1060 795 1100 800 1180 745 1230 695 1245 725 1325 620 1380 590 1400 450 1450 370M590 880L680 790M835 720L940 600V575L960 520 900 460 820 370M960 520L1000 540 1090 547 1180 460 1205 400M1130 360L1245 478 1270 455 1200 360M1270 440L1365 555 1380 590 1420 690M1355 755L1420 900 1480 1030 1525 1120 1340 1310M780 360L605 490 595 590 610 620M1525 500L1505 420 1480 360"/></g>
                  <g transform="translate(2100 740) scale(.5038 .3333)"><path d="M295 0L270 90 265 185 285 250 250 360 210 420 172 510 120 485 60 487 0 485M50 490L40 600 50 750 60 825 80 810 100 930 150 960 115 1060 160 1090 265 1190 350 1070 400 1040 470 1095 520 1090 570 1190M400 1040V830L450 750 605 485 640 505 740 370 780 305 825 322 890 235 940 258M400 1040L650 740 780 630 875 530 850 410 920 360 1000 340 1040 400M990 0L995 50 980 60 985 130 940 150 952 430M880 390L930 520 970 485 1060 700 1120 830 1180 940 1250 1110M1060 380L1195 270 1260 120 1340 50 1400 0M1195 270L1240 350 1290 400 1380 350 1440 440 1455 475 1525 360M1455 475L1430 520 1280 650 1210 720 1120 790 1020 920 980 980 890 1050M600 1190L610 1140 740 1030 830 1060 860 1110 980 1105 1050 1165 1150 1165M1050 1160L1350 880 1350 800 1480 690 1525 610"/></g>
                </g></g>
                <use href="#roads" class="road-top"/>
                <g class="moto-edge"><g id="motorways">
                  <g transform="translate(1380 310) scale(.4847 .3333)"><path d="M1108 360Q1160 450 1185 490T1300 590T1380 690Q1400 740 1420 800Q1450 885 1530 888L1568 880"/></g>
                  <g transform="translate(1380 720) scale(.4847 .3333)"><path d="M1215 825Q1220 880 1245 970T1290 1080 1325 1252"/></g>
                  <g transform="translate(2100 310) scale(.5038 .3333)"><path d="M395 360L430 450 500 570 580 660Q640 730 665 790T692 910 740 1050 780 1140Q780 1210 830 1275Q870 1330 940 1380M0 885Q60 890 145 845L220 840 290 830 370 785 450 760 540 700 580 655 770 555Q890 500 900 430L915 360"/></g>
                  <g transform="translate(2100 740) scale(.5038 .3333)"><path d="M825 -10Q900 50 940 90T1000 190Q1055 310 1052 400L1052 460Q1055 590 1100 690L1160 820 1230 980 1270 1085"/></g>
                </g></g>
                <use href="#motorways" class="moto-top"/>

                <g class="road-names">
                  <text transform="translate(1627 482) rotate(24)">Rigedyk</text>
                  <text transform="translate(1683 513) rotate(38)">Lytshuzen</text>
                  <text transform="translate(1766 495) rotate(76)">Iewei</text>
                  <text transform="translate(1634 563) rotate(12)">De Burd</text>
                  <text transform="translate(1933 562) rotate(52)">Pontdyk</text>
                  <text transform="translate(2073 663) rotate(-38)">Scharren</text>
                  <text transform="translate(1636 682) rotate(42)">Trophorne</text>
                  <text transform="translate(1589 695) rotate(-48)">Mardyk</text>
                  <text transform="translate(1846 699) rotate(50)">Strjitwei</text>
                  <text transform="translate(1578 740) rotate(-62)">Wâldwei</text>
                  <text transform="translate(1654 758) rotate(-62)">Suderséwei</text>
                  <text transform="translate(1473 877) rotate(36)">Sudergoawei</text>
                  <text transform="translate(1438 901) rotate(58)">Mientwei</text>
                  <text transform="translate(1753 905) rotate(30)">Suderséwei</text>
                  <text transform="translate(1988 850) rotate(66)">Straatweg</text>
                  <text transform="translate(2119 952) rotate(88)">Middenweg</text>
                  <text transform="translate(2453 456) rotate(-35)">Aengwirderweg</text>
                  <text transform="translate(2522 440) rotate(62)">dijk</text>
                  <text class="on-moto" transform="translate(2437 518) rotate(-25)">Rijksweg</text>
                  <text transform="translate(2676 483) rotate(-44)">Hegedyk</text>
                  <text transform="translate(2764 482) rotate(42)">Nijewei</text>
                  <text transform="translate(2556 529) rotate(-48)">Lang'ein</text>
                  <text transform="translate(2575 571) rotate(12)">Dominee Veenweg</text>
                  <text transform="translate(2230 610) rotate(-10)">Jousterweg</text>
                  <text transform="translate(2301 653) rotate(68)">Badweg</text>
                  <text transform="translate(2360 671) rotate(-35)">Binnendyk</text>
                  <text transform="translate(2298 710) rotate(-36)">Hoge Dijk</text>
                  <text transform="translate(2210 711) rotate(42)">Kampweg</text>
                  <text transform="translate(2646 654) rotate(-28)">Schoterlandseweg</text>
                  <text transform="translate(2810 731) rotate(-38)">Stellingenweg</text>
                  <text transform="translate(2861 508) rotate(-40)">Sch</text>
                  <text transform="translate(2241 843) rotate(-60)">Marwei</text>
                  <text transform="translate(2452 889) rotate(-42)">Hoofdweg</text>
                  <text transform="translate(2389 925) rotate(-50)">Hogeweg</text>
                  <text transform="translate(2315 1015) rotate(-68)">Grindweg</text>
                  <text transform="translate(2384 1027) rotate(-40)">Pieter Stuyvesantweg</text>
                  <text transform="translate(2634 980) rotate(56)">Steenwijkerweg</text>
                  <text transform="translate(2784 938) rotate(-34)">Steggerdaweg</text>
                  <text transform="translate(2167 1076) rotate(76)">Kooisloot</text>
                  <text transform="translate(2210 1128) rotate(42)">Zeedijk</text>
                  <text class="on-path"><textPath href="#p-vinke">Vinkegavaartweg</textPath></text>
                </g>
                <g class="places">
                  <text x="1709" y="550">Heeg</text><text x="1761" y="656">Woudsend</text>
                  <text x="1653" y="822">Balk</text><text x="1798" y="831">Sloten</text>
                  <text x="2008" y="715">Sint</text><text x="2007" y="731">Nicolaasga</text>
                  <text x="1551" y="995">Oudemirdum</text><text x="1943" y="1012" class="mid">Lemmer</text>
                  <text x="2131" y="573" class="mid">Joure</text><text x="2401" y="592" class="big">Heerenveen</text>
                  <text x="2567" y="897" class="big">Wolvega</text><text x="2520" y="1101">Oldemarkt</text>
                  <text x="2862" y="670">Oldeberkoop</text><text x="2867" y="846">Noord</text>
                  <text x="2718" y="434">Gorredijk</text><text x="2850" y="434">Jubbega</text>
                  <text x="1393" y="517">n</text>
                </g>
                <g class="nature"><text x="1641" y="933">Bremerwildernis</text><text x="2441" y="651" class="slant">Ten Woude</text><path d="M1640 898l6 7h-3l5 5h-7v3h-2v-3h-7l5-5h-3zM2441 617l6 7h-3l5 5h-7v3h-2v-3h-7l5-5h-3z"/></g>
                <g class="lakes"><text x="1671" y="606">Hegemer</text><text x="1671" y="622">Mar</text><text x="1535" y="684">Fluessen</text><text x="1756" y="748">Slotermeer</text><text x="2135" y="836">Tjeukemeer</text></g>
                <g class="regions">
                  <text transform="translate(2053 1049) rotate(46)">Friesland</text><text transform="translate(2036 1062) rotate(46)">Flevoland</text>
                  <text transform="translate(2438 1033) rotate(-22)">Friesland</text><text transform="translate(2452 1073) rotate(-22)">Overijssel</text>
                  <text transform="translate(2802 986) rotate(-32)">Friesland</text><text transform="translate(2812 1004) rotate(-32)">Overijssel</text>
                </g>
                <g class="shield shield--n">
                  <rect x="1385" y="460" width="39" height="17"/><text x="1405" y="474">N359</text>
                  <rect x="1372" y="714" width="39" height="17"/><text x="1392" y="728">N359</text>
                  <rect x="1681" y="688" width="39" height="17"/><text x="1700" y="702">N928</text>
                  <rect x="1877" y="734" width="39" height="17"/><text x="1896" y="748">N354</text>
                  <rect x="1598" y="841" width="39" height="17"/><text x="1617" y="855">N359</text>
                  <rect x="2002" y="895" width="39" height="17"/><text x="2021" y="909">N354</text>
                  <rect x="1859" y="977" width="39" height="17"/><text x="1878" y="991">N359</text>
                  <rect x="1893" y="1074" width="39" height="17"/><text x="1912" y="1088">N712</text>
                  <rect x="2786" y="510" width="39" height="17"/><text x="2805" y="524">N392</text>
                  <rect x="2744" y="564" width="39" height="17"/><text x="2764" y="578">N380</text>
                  <rect x="2518" y="676" width="39" height="17"/><text x="2538" y="690">N380</text>
                  <rect x="2225" y="745" width="39" height="17"/><text x="2244" y="759">N924</text>
                  <rect x="2565" y="854" width="39" height="17"/><text x="2584" y="869">N351</text>
                  <rect x="2468" y="942" width="39" height="17"/><text x="2488" y="956">N351</text>
                  <rect x="2274" y="1075" width="39" height="17"/><text x="2293" y="1089">N351</text>
                  <rect x="2679" y="1124" width="13" height="14"/><text x="2686" y="1137">N</text>
                </g>
                <g class="shield shield--a">
                  <rect x="2032" y="532" width="24" height="15"/><text x="2044" y="545">A7</text>
                  <rect x="2067" y="757" width="24" height="15"/><text x="2079" y="770">A6</text>
                  <rect x="1999" y="1086" width="24" height="15"/><text x="2011" y="1099">A6</text>
                  <rect x="2550" y="430" width="24" height="14"/><text x="2562" y="442">A7</text>
                  <rect x="2488" y="480" width="24" height="15"/><text x="2500" y="493">A7</text>
                  <rect x="2267" y="570" width="24" height="15"/><text x="2279" y="583">A7</text>
                  <rect x="2469" y="669" width="32" height="15"/><text x="2485" y="682">A32</text>
                  <rect x="2612" y="901" width="32" height="15"/><text x="2628" y="914">A32</text>
                </g>
                <g class="shield shield--e"><rect x="2051" y="563" width="31" height="15"/><text x="2067" y="576">E22</text><rect x="2353" y="540" width="31" height="14"/><text x="2369" y="552">E22</text></g>

                <g class="route">
                  <path class="slow" d="M2176 593L2211 590M2282 575l14 7 13-14 18-4"/>
                  <path class="fast" d="M2176 593L2159 620 2108 672M2096 698L2088 730 2078 777 2074 798 2044 853 2012 913 1967 968"/>
                  <path class="fast" d="M2211 590L2246 587 2278 575"/>
                  <path class="mid" d="M2108 672L2096 698M1967 968L1964 990"/>
                  <path class="town" d="M1928 972l12 5 9 8v7l21 6 0 6M2293 576l3 6M2327 564l9 9"/>
                </g>
                <path d="M1932 965l18-16 12 0-18 14z" fill="#333" opacity=".4"/>
                <path d="M1917 928q0-4 4-4h16q4 0 4 4v20q0 4-4 7l-7 12h-3l-7-12q-3-3-3-7z" fill="#5bdb0c"/><path d="M1919 927h20" stroke="#a6f56b" stroke-width="2"/><path d="M1926 934l6 5-6 5z" fill="#fff"/>
                <path d="M2326 534q0-4 4-4h16q4 0 4 4v18q0 3-4 6l-8 13h-1l-7-13q-4-3-4-6z" fill="#d60000"/><path d="M2328 532h20" stroke="#ff6a5a" stroke-width="2"/><text class="pin" x="2337" y="552">3</text>
              </svg>
              <div class="zoom">
                <button aria-label="Inzoomen"><svg viewBox="0 0 24 24"><path d="M12 3v18M3 12h18"/></svg></button>
                <button aria-label="Uitzoomen"><svg viewBox="0 0 24 24"><path d="M3 12h18"/></svg></button>
                <button aria-label="Passend maken"><svg viewBox="0 0 24 24"><path d="M12 4v16M4 12h16M9 6l3-3 3 3M9 18l3 3 3-3M6 9l-3 3 3 3M18 9l3 3-3 3"/></svg></button>
              </div>
              <button class="legend" aria-label="Legenda"><svg viewBox="0 0 24 24"><path d="M5 9l7 8" stroke="#3c0" stroke-width="4"/><path d="M12 17l6-11" stroke="#f80" stroke-width="3"/><circle cx="12" cy="17" r="3" fill="#fd0"/><circle cx="18" cy="6" r="3" fill="#e00"/></svg></button>
              <div class="styles"><button>Reset</button><button>Google Streets</button></div>
              <span class="brand">Google</span>
              <p class="credits">Kaartgegevens ©2013 Google - <a href="#">Gebruiksvoorwaarden</a></p>
              <a class="report" href="#">Een kaartfout rapporteren</a>
            </div>

            <nav class="tabs">
              <button class="tab is-current"><svg width="24" height="22"><use href="#i-gauge"/></svg>Dashboard</button>
              <button class="tab"><svg width="22" height="24"><use href="#i-pencil"/></svg>Wijzig</button>
              <button class="tab"><svg width="24" height="24"><use href="#i-dots"/></svg>Detail</button>
              <button class="tab"><svg width="24" height="24"><use href="#i-chart"/></svg>Snelheid</button>
              <button class="tab"><svg width="22" height="24"><use href="#i-bolt"/></svg>Spanning</button>
            </nav>
            <div class="dashboard">
              <div class="card card--trip"><p class="trip-from">Thuis - Steenloper 26 Lemmer</p><p class="trip-to"><svg width="20" height="18"><use href="#i-star"/></svg>Geotrack Telematics B.V. - Businesspark Friesland-West 35 a Nijehaske</p></div>
              <div class="card"><h4>STARTTIJD</h4><p>10:09</p></div>
              <div class="card"><h4>EINDTIJD</h4><p>10:25</p></div>
              <div class="card"><h4>DUUR</h4><p>00:15</p></div>
              <div class="card card--fold"><h4>GEM. SNELHEID</h4><p>86 km/u</p></div>
              <div class="card"><h4>AFSTAND</h4><p>22.7 km</p></div>
              <div class="card"><h4>KM-STAND</h4><p>2.195 km</p></div>
              <div class="card"><h4>TYPE</h4><p>Zakelijk</p></div>
              <div class="card"><h4>BEZOEKTIJD</h4><p>07:12</p></div>
            </div>
          </section>
        </div>
      </main>
    </div>
  </div>

  <aside class="notes notes--right">
    <p class="note note--route">Route op kaart</p>
    <p class="note note--filters">Dashboard filters</p>
    <p class="note note--data">Overzichtelijke<br>ritgegevens</p>
  </aside>

  <svg class="leaders" viewBox="0 0 3236 1524" aria-hidden="true">
    <path d="M2099 115H1436L1151 402M40 495H657L752 592M40 757H353M40 1156H753M3196 540H2881L2660 761M3196 968H2150L1966 1154M3196 1337H2690"/>
    <circle cx="1151" cy="402" r="11"/><circle cx="752" cy="592" r="11"/><circle cx="353" cy="757" r="11"/><circle cx="753" cy="1157" r="11"/><circle cx="2660" cy="761" r="11"/><circle cx="1966" cy="1154" r="11"/><circle cx="2690" cy="1338" r="11"/>
  </svg>
</div>
</body>
</html>
```
FILE: styles.css
```css
* { box-sizing: border-box; }
body { margin: 0; background: #fff; font-family: "Liberation Sans", Arial, sans-serif; font-size: 18px; color: #222; }
h2, h3, h4, p, ul, ol { margin: 0; padding: 0; list-style: none; font-size: inherit; font-weight: normal; }
button, input { font: inherit; color: inherit; }
button { background: none; border: 0; padding: 0; }
a { color: inherit; text-decoration: none; }
.sprite { position: absolute; width: 0; height: 0; }

.page { position: relative; display: grid; grid-template-columns: 338px 1fr 368px; grid-template-rows: 325px 1fr; min-height: 100vh; overflow: hidden; }

/* Callouts around the application */
.note { font-family: Lato, sans-serif; font-weight: 300; font-size: 37px; line-height: 42px; color: #888; white-space: nowrap; }
.note--small { font-size: 34px; line-height: 38px; }
.note--top { grid-column: 1 / -1; padding: 50px 0 0 44.4%; }
.notes--left { padding: 65px 0 0 40px; }
.notes--right { padding: 152px 44px 0 0; text-align: right; }
.note--objects { margin-top: 225px; }
.note--history { margin-top: 321px; }
.note--filters { margin-top: 386px; }
.note--data { margin-top: 281px; }
.notes--right .note { direction: ltr; }
.leaders { position: absolute; top: 0; left: 0; width: 100%; pointer-events: none; fill: #66cc99; }
.leaders path { fill: none; stroke: #66cc99; stroke-width: 4; stroke-linejoin: round; }

/* Application shell */
.app { display: flex; flex-direction: column; border: 1px solid #c4c8ca; border-bottom: 0; min-width: 0; }
.topbar { display: flex; align-items: center; height: 64px; padding: 0 22px 2px 18px; background: #3baab3; border-bottom: 2px solid #2a98a3; color: #fff; font-size: 20px; }
.logo { display: flex; align-items: center; gap: 8px; margin-right: 81px; }
.logo-mark { width: 56px; height: 30px; }
.logo span { font-family: Lato, sans-serif; font-weight: 900; font-size: 39px; line-height: 40px; text-shadow: 2px 2px 1px #2a7d86; }
.nav { display: flex; gap: 48px; }
.nav a, .user { display: flex; align-items: center; gap: 8px; }
.user { margin-left: auto; }
.caret { border: 5px solid transparent; border-top: 6px solid #222; border-bottom: 0; margin-left: 3px; }
.caret--light { border-width: 6px 6px 0; border-top-color: #fff; margin: 6px 0 0 4px; }

.workspace { display: flex; flex: 1; background: #efefef; }
.objects { width: 407px; background: #fff; }
.history { flex: 1; min-width: 0; margin-left: 7px; display: flex; flex-direction: column; }
.toolbar { display: flex; align-items: center; height: 40px; padding-right: 4px; background: linear-gradient(#e4e4e4, #f1f1f1); border-top: 1px solid #fff; border-bottom: 2px solid #ccc; }
.toolbar--search { padding-left: 3px; }
.search { width: 226px; height: 31px; margin-right: 5px; padding: 0 4px; border: 2px solid #c8c8c8; border-radius: 3px; background: linear-gradient(#f4f4f4, #fff 30%); color: #444; }
.sep { width: 2px; height: 20px; background: #aaa; }
.sep--after { margin-left: 4px; }
.tool { display: flex; align-items: center; gap: 4px; height: 34px; padding: 0 8px 0 12px; white-space: nowrap; }
.toolbar:not(.toolbar--search) > .tool:first-child { padding-left: 7px; }
.tool .caret { margin-left: -1px; }
.tool--menu { padding-right: 11px; }
.tool--small { font-size: 16px; padding-left: 10px; }
.tool--tight { padding-right: 3px; }
.tool--pressed { padding: 0 1px; border: 2px solid #999; border-radius: 5px; background: linear-gradient(#cfcfcf, #e6e6e6); }
.tool--view { padding: 0 2px 0 5px; }
.flip { transform: scaleX(-1); }
.views { display: flex; gap: 2px; margin-left: auto; }

/* Object list */
.group { display: flex; align-items: center; gap: 8px; height: 34px; padding: 0 7px 0 6px; font-size: 16px; background: linear-gradient(#f8f8f8, #e2e2e2); border-top: 1px solid #d6d6d6; border-bottom: 2px solid #ccc; }
.toolbar--search + .group { margin-top: 3px; }
.dot { width: 16px; height: 16px; border-radius: 50%; margin-left: auto; }
.dot--pink { background: #ff2fa5; }
.dot--cyan { background: #1cd3da; }
.dot--red { background: linear-gradient(#d05050 45%, #c01818 45%); }
.dot--lime { background: #a6f93c; }
.units { padding-bottom: 3px; font-size: 16px; line-height: 27px; color: #111; }
.units li { display: flex; align-items: center; gap: 3px; height: 27px; padding-left: 48px; }
.units svg { width: 24px; height: 26px; }
.units .is-selected { height: 29px; background: #ddd; border: 1px dotted #7da4dd; font-weight: bold; color: #1c3d73; }

/* Trips */
.columns { display: flex; flex: 1; }
.trips { width: 632px; padding-right: 9px; background: #fff; }
.trips-head { height: 38px; margin-right: -9px; padding-left: 35px; font: bold 17px/36px "Noto Sans", sans-serif; background: linear-gradient(#efefef, #d6d6d6); border-bottom: 2px solid #c8c8c8; }
.day { height: 54px; margin: 2px 0 0 3px; padding-left: 15px; font-size: 22px; line-height: 54px; color: #666; background: #e4e4e4; }
.day--next { position: relative; margin-top: 19px; }
.day--next::before { content: ""; position: absolute; top: -4px; left: 0; right: 0; height: 1px; background: #ddd; }
.leg { display: flex; min-height: 66px; padding: 7px 0 1px 18px; border-bottom: 1px solid #ddd; }
.legs .leg:last-child { border-bottom: 0; }
.leg.is-active { background: #ccc; border: 1px dotted #999; border-width: 1px 0; }
.mark { display: flex; flex-direction: column; gap: 8px; width: 39px; }
.badge { width: 22px; height: 21px; margin-top: 1px; border-radius: 3px; background: #999; color: #fff; font-weight: bold; line-height: 21px; text-align: center; }
.is-active .badge { background: #dc0000; }
.mark input { appearance: none; width: 18px; height: 18px; margin: 0 0 0 1px; border: 2px solid #b0b0b0; border-radius: 5px; background: #fff; }
.mark input:checked { border-color: #7d94b0; background: #bcd9f6; }
.mark input:checked::after { content: ""; display: block; width: 7px; height: 15px; margin: -7px 0 0 5px; border: solid #000; border-width: 0 3px 3px 0; transform: rotate(38deg); }
.body { flex: 1; line-height: 24px; }
.to { font-weight: bold; }
.to svg { width: 17px; height: 16px; margin: 0 5px 0 2px; vertical-align: 1px; }
.facts { line-height: 22px; }
.facts, .total { display: grid; grid-template-columns: 142px 219px 1fr; padding-left: 3px; }
.facts span, .total span { display: flex; align-items: center; gap: 4px; }
.facts svg, .total svg { width: 16px; height: 16px; }
.timeline { display: block; width: 620px; height: 18px; margin-left: 3px; background: #eaeaea; border: solid #c4c4c4; border-width: 2px 0; fill: #b4b4b4; }
.total { height: 62px; margin-left: 3px; padding: 0 0 4px 57px; background: #eaeaea; border-bottom: 2px solid #ccc; }

/* Map */
.detail { flex: 1; min-width: 0; margin-left: 8px; background: #fff; }
.map { position: relative; overflow: hidden; }
.map-canvas { display: block; width: 100%; background: #f4f3f0; font-family: Roboto, sans-serif; font-size: 15px; }
.map-canvas path { vector-effect: non-scaling-stroke; }
.map-canvas text { text-anchor: middle; paint-order: stroke; stroke-linejoin: round; }
.green path { fill: #dbe5d3; }
.urban path { fill: #e4dfd8; }
.streets path { fill: url(#streets); }
.water path { fill: #a5bfdd; }
.isle path { fill: #f4f3f0; }
.streams path { fill: none; stroke: #a5c4e6; stroke-width: 2; }
.streams .canal path { stroke-width: 4; }
.lanes path { fill: none; stroke: #dbd6cd; stroke-width: 1; }
.rail path { fill: none; stroke: #bbb; stroke-width: 2; }
.border path { fill: none; stroke: #8a8a8a; stroke-width: 2; stroke-dasharray: 16 6; }
.road-edge, .moto-edge, .road-top, .moto-top { fill: none; stroke-linejoin: round; stroke-linecap: round; }
.road-edge { stroke: #ddd0a8; stroke-width: 5; }
.road-top { stroke: #fff3a0; stroke-width: 3; }
.moto-edge { stroke: #e5982c; stroke-width: 8; }
.moto-top { stroke: #ffc443; stroke-width: 5; }
.road-names text { fill: #3d3000; stroke: #fff6a3; stroke-width: 5; }
.road-names .on-moto { stroke: #ffc443; }
.road-names .on-path { text-anchor: start; stroke-width: 3; }
.places text { fill: #111; stroke: #fff; stroke-width: 3; }
.map-canvas .mid { font-size: 17px; }
.map-canvas .big { font-size: 19px; }
.lakes text { fill: #4d6f9e; font-style: italic; stroke: #cddcf0; stroke-width: 2; }
.nature text { fill: #3c5a3c; stroke: #fff; stroke-width: 3; }
.nature path { fill: #3b4a3b; }
.slant { font-style: italic; }
.regions text { font-size: 16px; fill: #777; stroke: #fff; stroke-width: 2; }
.shield text { font-weight: 500; font-size: 15px; }
.shield--n rect { fill: #ffdf2e; stroke: #eda31c; stroke-width: 2; }
.shield--a rect { fill: #d9534f; stroke: #f0a8a6; }
.shield--e rect { fill: #55993a; stroke: #8cbf78; }
.shield--a text, .shield--e text, .pin { fill: #fff; }
.pin { font-weight: bold; font-size: 16px; }
.route path { fill: none; stroke-width: 9; stroke-linecap: round; stroke-linejoin: round; }
.route .fast { stroke: #f2471f; }
.route .mid { stroke: #f08030; }
.route .slow { stroke: #a9c83c; }
.route .town { stroke: #2c8420; }
.zoom { position: absolute; top: 10px; left: 9px; display: flex; flex-direction: column; gap: 6px; }
.zoom button, .legend { width: 24px; height: 24px; border-radius: 3px; background: rgba(60, 60, 60, .7); box-shadow: 1px 2px 3px rgba(0, 0, 0, .4); }
.zoom svg, .legend svg { display: block; width: 24px; height: 24px; fill: none; stroke: #fff; stroke-width: 3; }
.legend { position: absolute; top: 10px; right: 9px; }
.legend circle { stroke: none; }
.styles { position: absolute; right: 8px; bottom: 13px; display: flex; gap: 3px; }
.styles button { width: 132px; height: 24px; border-radius: 2px; background: rgba(60, 60, 60, .75); color: #fff; font: bold 14px/24px "Open Sans", sans-serif; }
.brand { position: absolute; left: 4px; bottom: 30px; font: 32px/40px "Liberation Serif", serif; color: #fff; text-shadow: 1px 1px 2px #555, 0 0 2px #666; }
.credits { position: absolute; left: 0; bottom: 0; height: 28px; padding: 0 4px 0 78px; font-size: 16px; line-height: 27px; color: #444; background: linear-gradient(90deg, rgba(255, 255, 255, 0), rgba(255, 255, 255, .5) 20%); }
.credits a { text-decoration: underline; }
.report { position: absolute; right: 4px; bottom: 5px; font-weight: bold; font-size: 13px; line-height: 16px; color: #222; }

/* Trip dashboard */
.tabs { display: flex; gap: 4px; height: 55px; padding: 2px 0 0 5px; background: linear-gradient(#dedede, #f0f0f0 40%, #d8d8d8); border-top: 8px solid #efefef; border-bottom: 5px double #c8c8c8; }
.tab { display: flex; align-items: center; gap: 7px; height: 40px; padding: 0 14px 4px 5px; border: 2px solid #b8b8b8; border-bottom: 0; border-radius: 5px 5px 0 0; background: linear-gradient(#dcdcdc, #eee); }
.tab.is-current { padding-right: 12px; background: #fff; font-weight: bold; }
.dashboard { display: grid; grid-template-columns: repeat(4, 1fr); gap: 15px 16px; padding: 8px 7px 0 9px; }
.card { height: 92px; padding: 15px 16px 0; border: 2px solid #dcdfe0; border-radius: 8px; background: linear-gradient(#f4f6f5, #edeff1); box-shadow: 0 2px 4px rgba(0, 0, 0, .06); }
.card--trip { grid-column: 1 / -1; height: 75px; padding-top: 12px; line-height: 24px; }
.card--fold { background: linear-gradient(135deg, transparent 97%, #bbb 98%), linear-gradient(#f4f6f5, #edeff1); }
.card h4 { font-size: 15px; line-height: 18px; font-weight: bold; color: #999; }
.card > p:last-child { font-size: 27px; line-height: 30px; margin-top: 8px; }
.trip-from { color: #999; }
.card > .trip-to:last-child { display: flex; align-items: center; gap: 3px; margin: 0; font-size: 18px; line-height: 24px; font-weight: bold; }
```
